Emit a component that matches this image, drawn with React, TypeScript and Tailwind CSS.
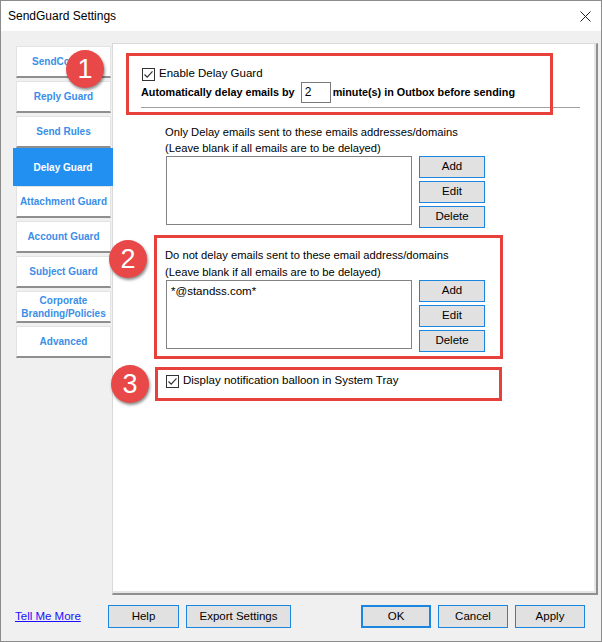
import React from 'react';

const tabs = [
  'SendConfirm',
  'Reply Guard',
  'Send Rules',
  'Delay Guard',
  'Attachment Guard',
  'Account Guard',
  'Subject Guard',
  'Corporate Branding/Policies',
  'Advanced',
];

function CheckBox() {
  return (
    <svg width="13" height="13" viewBox="0 0 13 13" className="shrink-0">
      <rect x="0.5" y="0.5" width="12" height="12" fill="#fff" stroke="#333" />
      <path d="M2.5 6.5 L5.2 9.2 L10.5 3.4" fill="none" stroke="#333" strokeWidth="1.2" />
    </svg>
  );
}

function SmallButton({ label }: { label: string }) {
  return (
    <div className="h-[22px] w-[66px] border border-[#1a86e0] bg-[#e1e1e1] flex items-center justify-center text-[11.5px] text-black">
      {label}
    </div>
  );
}

function ListBlock({ title, items, second }: { title: string; items: string[]; second?: boolean }) {
  return (
    <div className="ml-[52px] flex flex-col">
      <div className="h-[16px] leading-[16px] text-[11.2px] whitespace-nowrap">{title}</div>
      <div className={`h-[16px] leading-[16px] text-[11.2px] whitespace-nowrap ${second ? 'mt-[1px]' : ''}`}>
        (Leave blank if all emails are to be delayed)
      </div>
      <div className="flex">
        <div className="ml-[1px] w-[246px] h-[69px] border border-[#828282] bg-white px-[4px] pt-[2px] text-[11.5px] leading-[16px]">
          {items.map(i => (
            <div key={i}>{i}</div>
          ))}
        </div>
        <div className="ml-[7px] flex flex-col gap-[3px]">
          <SmallButton label="Add" />
          <SmallButton label="Edit" />
          <SmallButton label="Delete" />
        </div>
      </div>
    </div>
  );
}

function Badge({ n, className }: { n: string; className: string }) {
  return (
    <div
      className={`absolute w-[38px] h-[38px] rounded-full bg-[#e84848] text-white text-[27px] leading-none flex items-center justify-center shadow-[1px_2px_3px_rgba(0,0,0,0.45)] font-['Liberation_Sans',Arial,sans-serif] ${className}`}
    >
      {n}
    </div>
  );
}

function FooterButton({ label, w, primary }: { label: string; w: string; primary?: boolean }) {
  return (
    <div
      className={`h-[23px] ${w} ${primary ? 'border-2' : 'border'} border-[#1a86e0] bg-[#e1e1e1] flex items-center justify-center text-[11.5px] text-black`}
    >
      {label}
    </div>
  );
}

export default function App() {
  return (
    <div className="relative w-[602px] h-[642px] border border-[#8c8c8c] bg-[#f0f0f0] flex flex-col text-black font-['Liberation_Sans',Arial,sans-serif]">
      {/* title bar */}
      <div className="h-[30px] bg-white flex items-center justify-between pl-[7px] pr-[10px]">
        <span className="text-[12px]">SendGuard Settings</span>
        <svg width="11" height="11" viewBox="0 0 11 11">
          <path d="M0.5 0.5 L10.5 10.5 M10.5 0.5 L0.5 10.5" stroke="#222" strokeWidth="1" />
        </svg>
      </div>

      {/* body */}
      <div className="flex pt-[12px] pl-[14px]">
        <div className="w-[97px] pt-[3px] flex flex-col">
          {tabs.map(t =>
            t === 'Delay Guard' ? (
              <div
                key={t}
                className="relative z-10 -mt-[3px] -ml-[2px] w-[100px] h-[38px] bg-[#2190f0] text-white font-bold text-[10px] flex items-center justify-center"
              >
                {t}
              </div>
            ) : (
              <div
                key={t}
                className="ml-[1px] w-[95px] h-[32px] mb-[3px] bg-white border border-[#e3e3e3] border-b-2 border-b-[#8f8f8f] text-[#3a8ee8] font-bold text-[10px] leading-[13px] flex items-center justify-center text-center"
              >
                {t}
              </div>
            )
          )}
        </div>

        <div className="w-[486px] h-[552px] bg-white border-l border-t border-[#d9d9d9] border-r-2 border-b-2 border-r-[#8f8f8f] border-b-[#8f8f8f] shadow-[inset_-2px_-2px_0_#e6e6e6] flex flex-col">
          <div className="mt-[23px] ml-[29px] h-[14px] flex items-center gap-[4px]">
            <CheckBox />
            <span className="text-[11.5px]">Enable Delay Guard</span>
          </div>
          <div className="mt-[1px] ml-[28px] h-[21px] flex items-center">
            <span className="text-[10.8px] font-bold whitespace-nowrap">Automatically delay emails by</span>
            <div className="ml-[6px] w-[30px] h-[21px] border border-[#7a7a7a] bg-white px-[3px] text-[12px] leading-[19px]">2</div>
            <span className="ml-[2px] text-[10.8px] font-bold whitespace-nowrap">minute(s) in Outbox before sending</span>
          </div>
          <div className="mt-[4px] ml-[28px] w-[439px] h-[1px] bg-[#a0a0a0]" />

          <div className="mt-[16px]">
            <ListBlock title="Only Delay emails sent to these emails addresses/domains" items={[]} />
          </div>
          <div className="mt-[19px]">
            <ListBlock title="Do not delay emails sent to these email address/domains" items={['*@standss.com*']} second />
          </div>

          <div className="mt-[22px] ml-[53px] h-[14px] flex items-center gap-[4px]">
            <CheckBox />
            <span className="text-[11.5px]">Display notification balloon in System Tray</span>
          </div>
        </div>
      </div>

      {/* footer */}
      <div className="flex items-center pt-[10px] pl-[14px]">
        <span className="w-[93px] text-[11.5px] text-[#1a0dff] underline">Tell Me More</span>
        <FooterButton label="Help" w="w-[71px]" />
        <div className="ml-[7px]">
          <FooterButton label="Export Settings" w="w-[105px]" />
        </div>
        <div className="ml-[70px]">
          <FooterButton label="OK" w="w-[70px]" primary />
        </div>
        <div className="ml-[7px]">
          <FooterButton label="Cancel" w="w-[70px]" />
        </div>
        <div className="ml-[7px]">
          <FooterButton label="Apply" w="w-[70px]" />
        </div>
      </div>

      {/* annotations */}
      <div className="absolute left-[125px] top-[52px] w-[427px] h-[62px] border-[3px] border-[#e8403a]" />
      <div className="absolute left-[153px] top-[234px] w-[349px] h-[124px] border-[3px] border-[#e8403a]" />
      <div className="absolute left-[154px] top-[366px] w-[347px] h-[34px] border-[3px] border-[#e8403a]" />
      <Badge n="1" className="left-[65px] top-[49px]" />
      <Badge n="2" className="left-[108px] top-[239px]" />
      <Badge n="3" className="left-[110px] top-[364px]" />
    </div>
  );
}
